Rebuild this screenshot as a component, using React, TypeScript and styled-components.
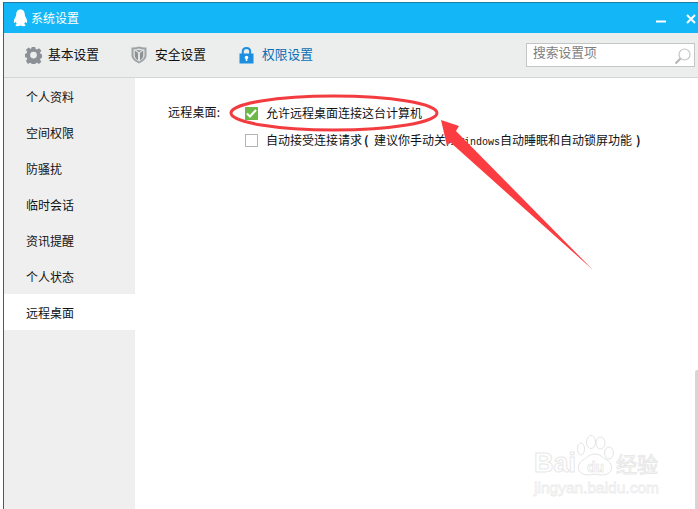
import React from "react";
import styled, { createGlobalStyle } from "styled-components";

const Global = createGlobalStyle`
  html, body { margin: 0; padding: 0; background: #fff; width: 698px; height: 509px; overflow: hidden; }
  #root { width: 698px; height: 509px; }
  * { box-sizing: border-box; }
`;

const Page = styled.div`
  position: relative;
  width: 698px;
  height: 509px;
  padding: 2px 0 0 3px;
  background: #fff;
  overflow: hidden;
  font-family: "Noto Sans CJK SC", "Liberation Sans", sans-serif;
  font-size: 12px;
  color: #111;
`;

const Win = styled.div`
  height: 507px;
  border-top: 1px solid #1c7ba6;
  border-left: 1px solid #1f6a8a;
  display: flex;
  flex-direction: column;
`;

const TitleBar = styled.div`
  height: 30px;
  flex: none;
  background: #13b7f7;
  display: flex;
  align-items: center;
  padding: 0 2px 0 9px;
  color: #fff;
`;

const TitleText = styled.span`
  margin-left: 3px;
  font-size: 12px;
  line-height: 16px;
  flex: 1;
`;

const WinButtons = styled.div`
  display: flex;
  align-items: center;
  gap: 20px;
  margin-top: 2px;
`;

const MinGlyph = styled.svg`
  margin-top: 4px;
`;

const Toolbar = styled.div`
  height: 45px;
  flex: none;
  background: #eceeee;
  border-bottom: 1px solid #d4d6d6;
  display: flex;
  align-items: center;
  padding: 0 3px 0 21px;
`;

const Tab = styled.div<{ $w: number; $active?: boolean; $gap: number }>`
  width: ${(p) => p.$w}px;
  display: flex;
  align-items: center;
  gap: ${(p) => p.$gap}px;
  font-size: 12.75px;
  color: ${(p) => (p.$active ? "#0a6fb5" : "#111")};
`;

const TabLabel = styled.span`
  margin-top: -3px;
`;

const Search = styled.div`
  margin-left: auto;
  width: 169px;
  height: 24px;
  background: #fff;
  border: 1px solid #c4c6c6;
  display: flex;
  align-items: center;
  justify-content: space-between;
  padding: 0 3px 0 6px;
  color: #7e7e7e;
  font-size: 12.75px;
`;

const SearchText = styled.span`
  margin-top: -7px;
`;

const SearchGlyph = styled.svg`
  margin-top: 2px;
`;

const Body = styled.div`
  position: relative;
  flex: 1;
  display: flex;
  min-height: 0;
`;

const Sidebar = styled.nav`
  width: 131px;
  flex: none;
  background: #efefef;
`;

const NavItem = styled.div<{ $active?: boolean }>`
  height: 36px;
  display: flex;
  align-items: center;
  padding: 0 0 0 22px;
  font-size: 12px;
  background: ${(p) => (p.$active ? "#fff" : "transparent")};
`;

const Content = styled.main`
  flex: 1;
  background: #fff;
  padding: 26px 0 0 33px;
  display: grid;
  grid-template-columns: 77px 1fr;
  grid-auto-rows: 27px;
  align-content: start;
`;

const Label = styled.div`
  font-size: 12px;
  line-height: 16px;
  letter-spacing: 0.2px;
`;

const Option = styled.div`
  display: flex;
  align-items: flex-start;
  gap: 8px;
  line-height: 18px;
  font-size: 12px;
  white-space: nowrap;
`;

const Box = styled.div<{ $checked?: boolean }>`
  width: 13px;
  height: 13px;
  margin-top: 3px;
  flex: none;
  background: ${(p) => (p.$checked ? "#6eb84a" : "#fff")};
  border: ${(p) => (p.$checked ? "none" : "1px solid #b4b4b4")};
  display: flex;
  align-items: center;
  justify-content: center;
`;

const Paren = styled.span<{ $close?: boolean }>`
  display: inline-block;
  width: 12px;
  font-weight: 700;
  padding-left: ${(p) => (p.$close ? "4px" : "2px")};
`;

const Latin = styled.span`
  font-family: "Liberation Mono", monospace;
  font-size: 10px;
`;

const Scroll = styled.div`
  position: absolute;
  right: 0;
  bottom: 0;
  width: 3px;
  height: 139px;
  background: #d5d5d5;
  border-radius: 2px 0 0 0;
`;

const Overlay = styled.svg`
  position: absolute;
  left: 0;
  top: 0;
  pointer-events: none;
`;

const Watermark = styled.div`
  position: absolute;
  left: 534px;
  top: 434px;
  width: 160px;
  height: 64px;
  color: #fff;
`;

const BrandRow = styled.div`
  display: flex;
  align-items: flex-end;
  height: 44px;
`;

const BrandWord = styled.span`
  font-family: "Liberation Sans", sans-serif;
  font-size: 27px;
  line-height: 30px;
  font-weight: 700;
  -webkit-text-stroke: 1px #e8e8e8;
`;

const BrandCn = styled.span`
  font-size: 21px;
  line-height: 30px;
  margin-left: 40px;
  -webkit-text-stroke: 1px #e8e8e8;
`;

const Domain = styled.div`
  font-family: "Liberation Sans", sans-serif;
  font-size: 15.500px;
  line-height: 17px;
  margin-top: 1px;
  -webkit-text-stroke: 0.8px #ececec;
`;

const Paw = styled.svg`
  position: absolute;
  left: 43px;
  top: 1px;
`;

const DuText = styled.text`
  font-family: "Liberation Sans", sans-serif;
  font-size: 14px;
  font-weight: 700;
  fill: #fff;
  stroke: #e2e2e2;
  stroke-width: 0.6px;
`;

const navItems = ["个人资料", "空间权限", "防骚扰", "临时会话", "资讯提醒", "个人状态", "远程桌面"];

const Penguin = () => (
  <svg width="15" height="18" viewBox="0 0 15 18">
    <path
      fill="#fff"
      d="M7.5 0.5C4.4 0.5 3.2 3 3.2 5.6 3.2 6.6 2.8 7.4 2.2 8.5 1.2 10.3 0.5 12 1 13.7 1.4 14.4 2.2 13.4 2.6 12.7 2.8 13.7 3.3 14.4 4 15 3 15.3 2.3 15.8 2.6 16.6 3 17.4 5.6 17.3 7.5 16.4 9.4 17.3 12 17.4 12.4 16.6 12.7 15.8 12 15.3 11 15 11.7 14.4 12.2 13.7 12.4 12.7 12.8 13.4 13.6 14.4 14 13.7 14.5 12 13.8 10.3 12.8 8.5 12.2 7.4 11.8 6.6 11.8 5.6 11.8 3 10.6 0.5 7.5 0.5Z"
    />
  </svg>
);

const Gear = () => (
  <svg width="17" height="17" viewBox="0 0 24 24">
    <path
      fill="#8b9196"
      fillRule="evenodd"
      d="M9.5 0h5l.7 3.4 2 .9L20.200 2.400l3.500 3.500-1.900 3 .8 2 3.400.7v5l-3.400.7-.8 2 1.900 3-3.500 3.500-3-1.900-2 .8-.7 3.300h-5l-.7-3.300-2-.8-3 1.900L.800 21.300l1.900-3-.9-2L-1 15.600v-5l2.800-.7.900-2-1.900-3L4.300 1.400l3 1.900 1.500-.7ZM12 7.500a5 5 0 1 0 0 10 5 5 0 0 0 0-10Z"
      transform="translate(0.6 -0.500) scale(0.95)"
    />
  </svg>
);

const Shield = () => (
  <svg width="16" height="18" viewBox="0 0 16 18">
    <path fill="#9ea3a6" d="M0.500 1.500C3 1.800 5.500 1.200 8 0.500 10.500 1.200 13 1.800 15.500 1.500V9.500C15.500 13 11.500 16 8 17.500 4.500 16 0.500 13 0.500 9.500Z" />
    <path fill="#e4e6e6" d="M2.500 3.500C4.500 3.500 6 3.200 8 2.600 10 3.200 11.500 3.500 13.500 3.500V9.500C13.500 12 10.500 14.300 8 15.400 5.500 14.300 2.500 12 2.500 9.500Z" />
    <path fill="#8c9194" d="M3.800 4.500 7 7V14.200C5.500 13.400 3.800 11.700 3.800 9.800ZM12.200 4.500 9 7V14.200C10.500 13.400 12.200 11.700 12.200 9.800ZM5 4.200C7 4.200 9 4.200 11 4.200L8 6.300Z" />
  </svg>
);

const Lock = () => (
  <svg width="15" height="17" viewBox="0 0 15 17">
    <path fill="none" stroke="#1b8ee0" strokeWidth="2" d="M3.800 7V4.500C3.800 2.500 5.400 1 7.500 1S11.200 2.500 11.200 4.500V7" />
    <rect x="0.500" y="6.500" width="14" height="10" fill="#1b8ee0" />
    <circle cx="7.500" cy="10.500" r="1.800" fill="#fff" />
    <rect x="6.700" y="11" width="1.600" height="3" fill="#fff" />
  </svg>
);

export default function App() {
  return (
    <Page>
      <Global />
      <Win>
        <TitleBar>
          <Penguin />
          <TitleText>系统设置</TitleText>
          <WinButtons>
            <MinGlyph width="10" height="3" viewBox="0 0 10 3">
              <rect width="10" height="2" y="0.500" fill="#fff" />
            </MinGlyph>
            <svg width="10" height="10" viewBox="0 0 10 10">
              <path d="M1 1 9 9M9 1 1 9" stroke="#fff" strokeWidth="2" fill="none" />
            </svg>
          </WinButtons>
        </TitleBar>
        <Toolbar>
          <Tab $w={106} $gap={6}>
            <Gear />
            <TabLabel>基本设置</TabLabel>
          </Tab>
          <Tab $w={108} $gap={8}>
            <Shield />
            <TabLabel>安全设置</TabLabel>
          </Tab>
          <Tab $w={90} $gap={8} $active>
            <Lock />
            <TabLabel>权限设置</TabLabel>
          </Tab>
          <Search>
            <SearchText>搜索设置项</SearchText>
            <SearchGlyph width="17" height="17" viewBox="0 0 17 17">
              <circle cx="10.500" cy="6.500" r="5.500" fill="none" stroke="#c4c4c4" strokeWidth="1.200" />
              <path d="M6.500 10.500 1.500 15.500" stroke="#b4b4b4" strokeWidth="2" />
            </SearchGlyph>
          </Search>
        </Toolbar>
        <Body>
          <Sidebar>
            {navItems.map((n, i) => (
              <NavItem key={n} $active={i === 6}>
                {n}
              </NavItem>
            ))}
          </Sidebar>
          <Content>
            <Label>远程桌面:</Label>
            <Option>
              <Box $checked>
                <svg width="11" height="9" viewBox="0 0 11 9">
                  <path d="M1 4.500 4 7.500 10 1" stroke="#fff" strokeWidth="2" fill="none" />
                </svg>
              </Box>
              <span>允许远程桌面连接这台计算机</span>
            </Option>
            <span />
            <Option>
              <Box />
              <span>
                自动接受连接请求<Paren>(</Paren>建议你手动关闭<Latin>Windows</Latin>自动睡眠和自动锁屏功能<Paren $close>)</Paren>
              </span>
            </Option>
          </Content>
          <Scroll />
        </Body>
      </Win>
      <Overlay width="698" height="509" viewBox="0 0 698 509">
        <ellipse cx="334" cy="113" rx="103" ry="17" fill="none" stroke="#f23c40" strokeWidth="3" />
        <polygon points="441,120 459,126 456,131 593,270 450,142 447,146" fill="#fb3c40" />
      </Overlay>
      <Watermark>
        <Paw width="38" height="42" viewBox="0 0 38 42">
          <g fill="#fff" stroke="#e4e4e4" strokeWidth="1">
            <ellipse cx="4" cy="14" rx="3.500" ry="6" />
            <ellipse cx="14" cy="7" rx="4.500" ry="6.500" />
            <ellipse cx="23.500" cy="8" rx="4.500" ry="6" />
            <ellipse cx="32" cy="18" rx="4.500" ry="6" />
            <path d="M18 19C13 19 11 22 6 25 1 28 0 34 3 37 7 41 13 40 18 39 23 40 29 41 33 37 36 34 35 28 30 25 25 22 23 19 18 19Z" />
          </g>
          <DuText x="10" y="37">du</DuText>
        </Paw>
        <BrandRow>
          <BrandWord>Bai</BrandWord>
          <BrandCn>经验</BrandCn>
        </BrandRow>
        <Domain>jingyan.baidu.com</Domain>
      </Watermark>
    </Page>
  );
}
